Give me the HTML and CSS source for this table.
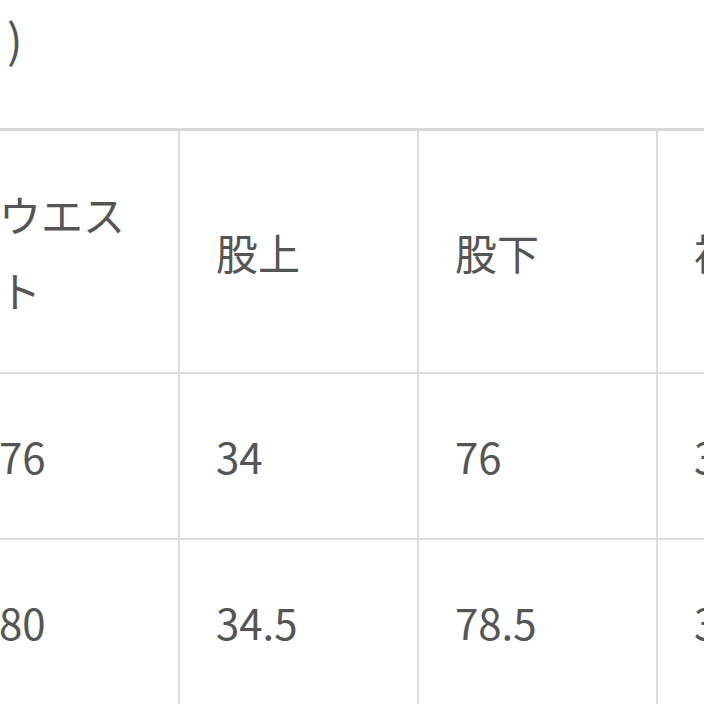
FILE: index.html
```html
<!DOCTYPE html>
<html lang="ja">
<head>
<meta charset="utf-8">
<link rel="stylesheet" href="styles.css">
</head>
<body>
<div class="page">
  <p class="unit">)</p>
  <table class="size-table">
    <tr class="head">
      <td class="c1">ウエスト</td>
      <td>股上</td>
      <td>股下</td>
      <td>裾幅</td>
    </tr>
    <tr class="row">
      <td class="c1">76</td>
      <td>34</td>
      <td>76</td>
      <td>30</td>
    </tr>
    <tr class="row">
      <td class="c1">80</td>
      <td>34.5</td>
      <td>78.5</td>
      <td>31</td>
    </tr>
  </table>
</div>
</body>
</html>
```
FILE: styles.css
```css
html, body {
  margin: 0;
  padding: 0;
  overflow: hidden;
  background: #ffffff;
}
.page {
  width: 704px;
  height: 704px;
  overflow: hidden;
  font-family: "Noto Sans CJK JP", "Noto Sans", sans-serif;
  color: #555555;
  font-size: 42px;
}
.unit {
  margin: 0;
  padding-left: 7px;
  height: 128px;
  font-size: 46px;
  line-height: 76px;
  white-space: nowrap;
}
.size-table {
  border-collapse: collapse;
  margin-left: -39px;
  table-layout: fixed;
  width: 934px;
  border-top: 3px solid #d8d8d8;
}
.size-table td {
  width: 164px;
  padding: 0 37px 0 36px;
  border: 2px solid #dedede;
  vertical-align: middle;
  line-height: 76px;
  text-align: left;
}
.size-table td.c1 {
  width: 142px;
}
.head td {
  height: 241px;
  border-top: 3px solid #d8d8d8;
}
.row td {
  height: 164px;
}
```
